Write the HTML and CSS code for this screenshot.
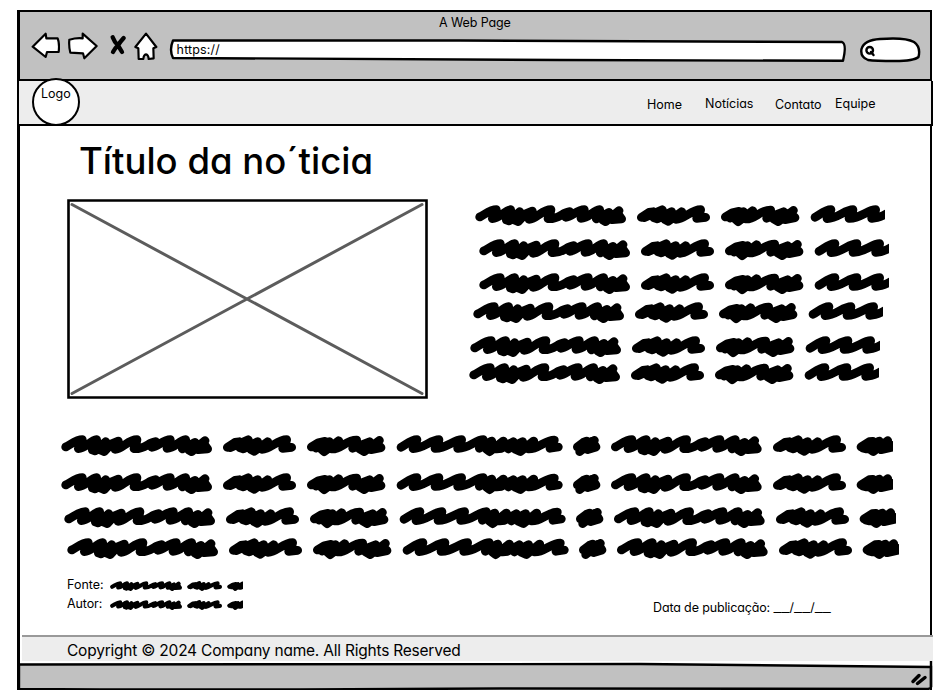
FILE: index.html
```html
<!DOCTYPE html>
<html lang="pt">
<head>
<meta charset="utf-8">
<title>A Web Page</title>
<link rel="stylesheet" href="styles.css">
</head>
<body>
<svg class="defs" aria-hidden="true">
  <defs>
    <g id="long"><path d="M14 36C30 28 46 14 64 14Q62 26 52 41C72 42 88 16 107 14L94 45L102 48L134 20L120 46L130 50L152 26L172 18L162 43C186 42 200 14 228 14Q227 28 219 41C250 44 262 22 284 20L272 37C290 36 306 14 328 14Q326 28 318 40C342 40 354 16 374 14L364 42L402 22L382 44L392 50L432 17L412 44L440 42L430 28"/></g>
    <g id="medium"><path d="M499 37L522 22L535 20L507 38L562 14L536 38L547 42L590 20L570 44L580 49L620 20L603 43C630 42 648 14 677 14Q675 28 665 40L692 37"/></g>
    <g id="mixed"><path d="M751 36L772 23L792 19L765 39L805 20L778 40L789 50L833 17L812 42C840 44 856 14 887 15L875 40L926 20L896 42L910 50L955 16L930 44L960 38L948 26"/></g>
    <g id="wave"><path d="M1020 37C1036 28 1050 14 1068 14Q1066 28 1056 41C1086 42 1110 14 1134 14Q1132 28 1122 40C1154 42 1178 14 1202 14Q1200 28 1190 40C1222 42 1244 14 1267 14L1255 40L1292 18L1276 42L1286 50L1327 18L1306 42L1322 40L1357 20L1342 42L1385 20L1363 43L1378 50L1418 18L1402 42C1430 44 1454 14 1480 15L1467 40L1492 36"/></g>
    <path id="short" d="M1549 36L1567 22L1577 18L1557 38L1556 50L1600 16L1580 44L1605 36L1594 18L1575 40"/>
    <path id="tail" d="M2400 36L2425 20L2436 19L2405 39L2417 42L2455 18L2425 42L2437 50L2480 17L2460 44L2500 35L2485 28"/>
    <g id="scribble" class="marker">
      <use href="#long"/><use href="#medium"/><use href="#mixed"/><use href="#wave"/><use href="#short"/>
      <use href="#long" x="1649"/><use href="#medium" x="1650"/><use href="#tail"/>
    </g>
  </defs>
</svg>

<div class="window">
  <header class="chrome">
    <div class="page-name"><span class="t-page">A Web Page</span></div>
    <div class="tools">
      <svg class="ink back" viewBox="93 96 87 81"><path d="M98 140L137 101L139 115L173 115Q179 130 176 156L141 156L137 171Z"/></svg>
      <svg class="ink forward" viewBox="205 96 90 84"><path d="M209 119Q230 113 249 115L249 101L291 138L254 175L250 160L212 158Q207 140 209 119Z"/></svg>
      <svg class="ink stop" viewBox="327 102 54 63"><path class="thick" d="M338 112Q344 128 354 136L366 156M371 114Q360 126 354 136Q346 144 339 156"/></svg>
      <svg class="ink home" viewBox="402 94 72 87"><path d="M438 99L469 139L460 143L461 173L446 175Q445 162 438 161Q431 162 430 175L416 175L415 143L406 139Z"/></svg>
      <div class="address">
        <svg viewBox="169 38 678 25"><path d="M173 40.5L460 40.5L842 42Q847 44 843 60.8L560 60L173 58Q169 50 173 40.5Z"/></svg>
        <span class="t-url">https://</span>
      </div>
      <svg class="search" viewBox="860 36 61 27"><path d="M868 60Q860 57 861.500 49Q864 40 880 39Q905 37 914 42Q921 47 918.500 57Q914 61 895 61Q875 61 868 60Z"/><circle cx="869.700" cy="50.300" r="3.300"/><path d="M871 52L873.500 55"/></svg>
    </div>
  </header>

  <div class="site-header">
    <div class="logo"><span class="t-logo">Logo</span></div>
    <nav>
      <a class="n-home">Home</a><a class="n-news raised">Notícias</a><a class="n-contact">Contato</a><a class="n-team raised">Equipe</a>
    </nav>
  </div>

  <main>
    <h1>Título da no´ticia</h1>
    <div class="lead">
      <svg class="picture" viewBox="0 0 361 200"><path class="cross" d="M5 5.500L355 194.500M5 194.500L355 5.500"/><path class="edge" d="M1.500 1.500H359.500V198.500H1.500Z"/></svg>
      <div class="side-text">
        <svg class="s1" viewBox="0 0 1230 66"><use href="#scribble"/></svg>
        <svg class="s2" viewBox="0 0 1230 66"><use href="#scribble"/></svg>
        <svg class="s3" viewBox="0 0 1230 66"><use href="#scribble"/></svg>
        <svg class="s4" viewBox="0 0 1230 66"><use href="#scribble"/></svg>
        <svg class="s5" viewBox="0 0 1230 66"><use href="#scribble"/></svg>
        <svg class="s6" viewBox="0 0 1230 66"><use href="#scribble"/></svg>
      </div>
    </div>
    <div class="body-text">
      <svg class="b1" viewBox="0 0 2496 66"><use href="#scribble"/></svg>
      <svg class="b2" viewBox="0 0 2496 66"><use href="#scribble"/></svg>
      <svg class="b3" viewBox="0 0 2496 66"><use href="#scribble"/></svg>
      <svg class="b4" viewBox="0 0 2496 66"><use href="#scribble"/></svg>
    </div>
    <div class="meta">
      <dl>
        <dt class="t-source">Fonte:</dt><dd><svg viewBox="0 0 837 66"><use href="#scribble"/></svg></dd>
        <dt class="t-author">Autor:</dt><dd><svg viewBox="0 0 837 66"><use href="#scribble"/></svg></dd>
      </dl>
      <p class="t-date"><span class="date-label">Data de publicação: </span><span class="blank">__</span>/<span class="blank">__</span>/<span class="blank">__</span></p>
    </div>
  </main>

  <footer><p>Copyright © 2024 Company name. All Rights Reserved</p></footer>
  <svg class="status" viewBox="17 661 916 29"><path class="bar" d="M19 664.500L640 664L931 667V687Q931 689 926 689L500 688.500L300 689.500H100L19 689Z"/><path class="side" d="M18.800 660V689M931 661V687"/><path class="grip" d="M913 681.500L919 675.500M917.500 683.500L925 677.500"/></svg>
</div>
</body>
</html>
```
FILE: styles.css
```css
* { box-sizing: border-box; }
body { margin: 0; background: #fff; color: #000; font: 12.5px/16px Inter, "Liberation Sans", sans-serif; font-feature-settings: "cv11" 1; overflow: hidden; }
svg { display: block; flex: none; }
h1, p, dl, dd { margin: 0; }
.defs { width: 0; height: 0; position: absolute; }
.marker { fill: none; stroke: #000; stroke-width: 26; stroke-linecap: round; stroke-linejoin: round; }

.window { width: 915px; margin: 10px 0 0 17px; border: solid #000; border-width: 2px 2px 0 3px; }

.chrome { height: 69px; background: #c1c1c1; border-bottom: 2px solid #000; }
.page-name { height: 20px; padding: 3px 0 0 419px; letter-spacing: -.1px; white-space: nowrap; }
.tools { display: flex; height: 34px; align-items: flex-start; }
.ink { fill: #fff; stroke: #000; stroke-width: 6.5; stroke-linejoin: round; stroke-linecap: round; }
.back { width: 29px; height: 27px; margin: 0 0 0 11px; }
.forward { width: 30px; height: 28px; margin-left: 8.300px; }
.stop { width: 18px; height: 21px; margin: 2px 0 0 10.300px; fill: none; overflow: visible; }
.thick { stroke-width: 13; }
.home { width: 24px; height: 29px; margin: 0 0 0 7px; }
.address { display: grid; width: 678px; height: 25px; margin: 6px 0 0 11px; align-items: center; }
.address svg, .address span { grid-area: 1 / 1; }
.address svg, .search { width: 678px; height: 25px; fill: #fff; stroke: #000; stroke-width: 2.400; stroke-linejoin: round; }
.address span { padding: 0 0 2px 8px; letter-spacing: .15px; }
.search { width: 61px; height: 27px; margin: 4px 0 0 13px; stroke-linecap: round; }

.site-header { display: flex; width: 916px; height: 45px; margin-left: -3px; background: #ededed; border: solid #000; border-width: 0 2px 2px; }
.logo { width: 48px; height: 48px; margin: -3px 0 0 13px; padding: 6px 0 0 7px; border: 2px solid #000; border-radius: 50%; background: #fff; }
nav { display: flex; margin-left: 567px; padding-top: 16px; white-space: nowrap; }
.raised { margin-top: -1px; }
.n-home { width: 58px; }
.n-news { width: 70px; }
.n-contact { width: 60px; letter-spacing: -.1px; }

main { height: 509px; padding: 11px 0 0 47px; }
h1 { margin-left: 12px; height: 62px; font-size: 36.500px; line-height: 49px; font-weight: 500; white-space: nowrap; }
.lead { display: flex; height: 236px; }
.picture { width: 361px; height: 200px; }
.cross { stroke: #5c5c5c; stroke-width: 3; fill: none; stroke-linecap: round; }
.edge { stroke: #000; stroke-width: 2.600; fill: none; }
.side-text { padding: 6px 0 0 41px; }
.side-text svg { width: 410px; height: 22px; }
.s1 { margin-left: 6px; }
.s2, .s3 { margin: 12px 0 0 10px; }
.s4 { margin: 7px 0 0 4px; }
.s5 { margin: 12px 0 0 1px; }
.s6 { margin: 5px 0 0; }
.body-text { height: 140px; margin-left: -6px; }
.body-text svg { width: 832px; height: 22px; }
.b2 { margin-top: 16px; }
.b3 { margin: 12px 0 0 3px; }
.b4 { margin: 9px 0 0 6px; }
.meta { display: flex; }
dl { display: grid; grid-template-columns: 43px 133px; grid-auto-rows: 19px; padding-top: 2px; }
.t-author { letter-spacing: -.1px; }
dd svg { width: 133px; height: 10.500px; margin-top: 4px; }
.t-date { margin: 25px 0 0 410px; height: 16px; white-space: nowrap; }
.date-label { letter-spacing: -.14px; }
.blank { font-size: 18px; font-weight: 300; line-height: 0; }

footer { width: 911px; height: 26px; margin-left: 2px; background: #ededed; border-top: 2px solid #999; position: relative; }
footer p { padding: 4px 0 0 45px; font-size: 15.500px; line-height: 20px; letter-spacing: -.22px; white-space: nowrap; }
.status { width: 916px; height: 29px; margin-left: -3px; overflow: visible; }
.bar { fill: #c1c1c1; stroke: #000; stroke-width: 2.400; }
.side { stroke: #000; stroke-width: 2.400; }
.grip { stroke: #000; stroke-width: 3.500; stroke-linecap: round; }
```
